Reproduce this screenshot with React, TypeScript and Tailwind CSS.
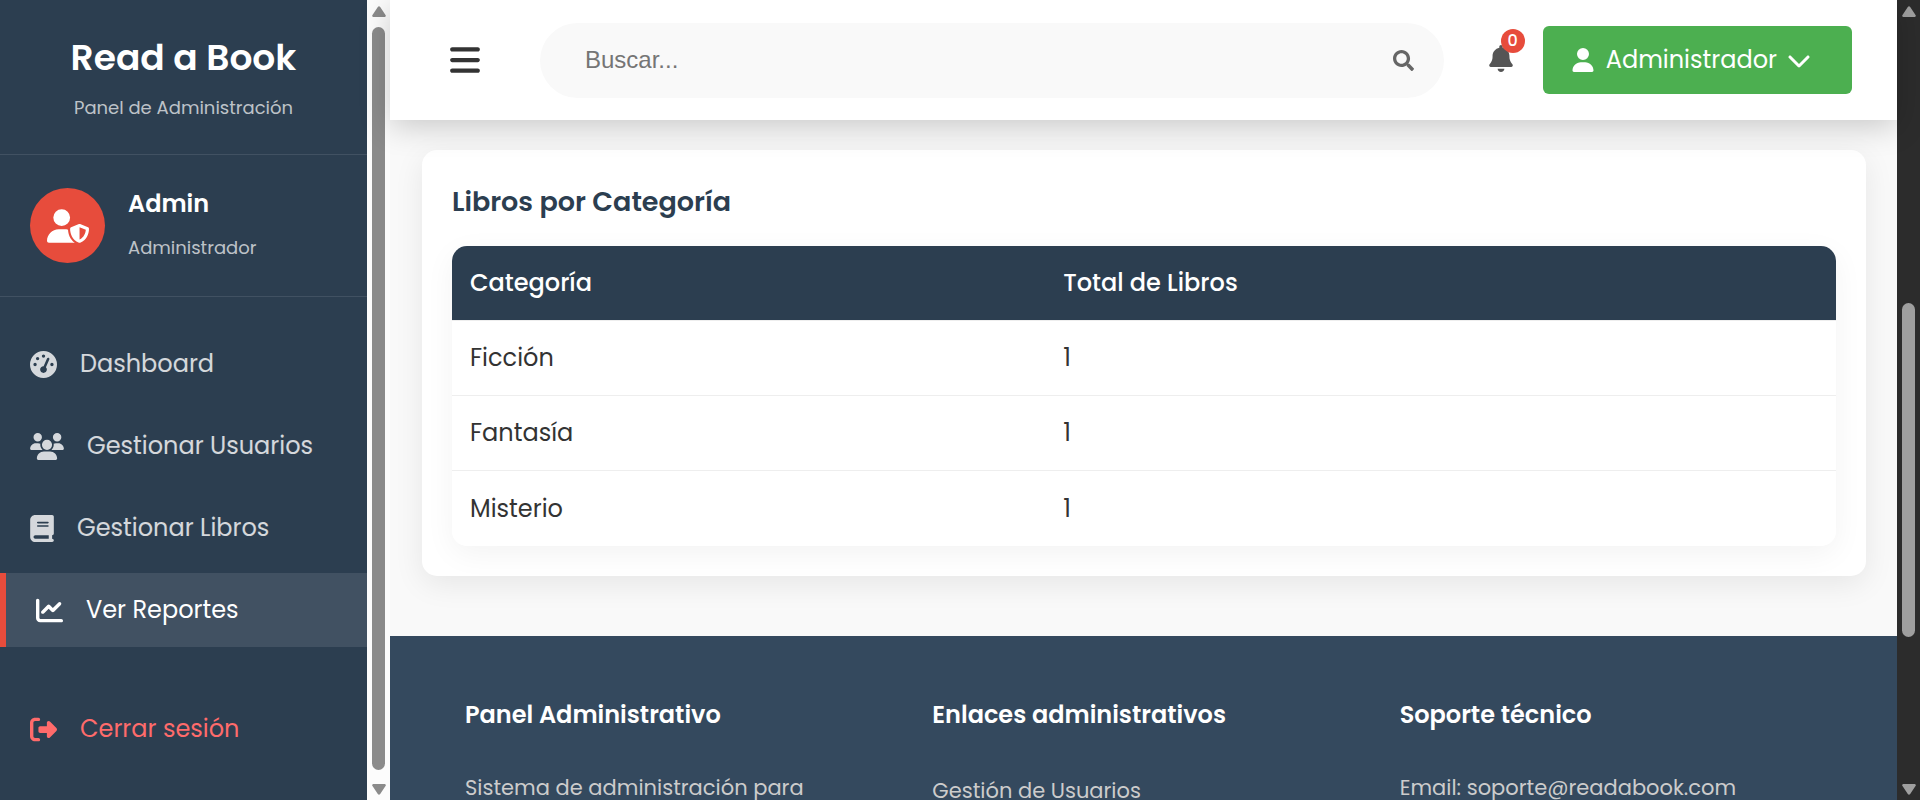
import React from "react";
import {
  FaBars,
  FaBell,
  FaBook,
  FaChartLine,
  FaChevronDown,
  FaGaugeHigh,
  FaRightFromBracket,
  FaUser,
  FaUsers,
  FaUserShield,
} from "react-icons/fa6";
import { FaSearch } from "react-icons/fa";
import type { IconType } from "react-icons";

type NavItem = { label: string; icon: IconType; iconWidth: string; active?: boolean };

const navItems: NavItem[] = [
  { label: "Dashboard", icon: FaGaugeHigh, iconWidth: "w-[27px]" },
  { label: "Gestionar Usuarios", icon: FaUsers, iconWidth: "w-[34px]" },
  { label: "Gestionar Libros", icon: FaBook, iconWidth: "w-6" },
  { label: "Ver Reportes", icon: FaChartLine, iconWidth: "w-[27px]", active: true },
];

const categories = [
  { name: "Ficción", total: 1 },
  { name: "Fantasía", total: 1 },
  { name: "Misterio", total: 1 },
];

function Arrow({ down = false }: { down?: boolean }) {
  return (
    <svg viewBox="0 0 14 11" className="h-[11px] w-[14px] shrink-0" fill="currentColor" aria-hidden="true">
      <path
        d={
          down
            ? "M1.5 0h11a1.2 1.2 0 0 1 1 2L8.2 10a1.5 1.5 0 0 1-2.4 0L.5 2a1.2 1.2 0 0 1 1-2z"
            : "M1.5 11h11a1.2 1.2 0 0 0 1-2L8.2 1a1.5 1.5 0 0 0-2.4 0L.5 9a1.2 1.2 0 0 0 1 2z"
        }
      />
    </svg>
  );
}

function Sidebar() {
  return (
    <aside className="w-[367px] shrink-0 overflow-hidden bg-[#2c3e50]">
      <div className="flex flex-col items-center border-b border-white/10 pt-8 pb-8">
        <h1 className="text-[36px] leading-[52px] font-semibold text-white">Read a Book</h1>
        <p className="mt-[10px] text-[18px] leading-7 text-white/70">Panel de Administración</p>
      </div>
      <div className="flex items-center gap-[23px] border-b border-white/10 px-[30px] py-8">
        <div className="flex size-[75px] items-center justify-center rounded-full bg-[#e74c3c] text-white">
          <FaUserShield className="h-[34px] w-[42px]" />
        </div>
        <div className="flex flex-col gap-3">
          <h2 className="text-[24px] leading-[33px] font-semibold text-white">Admin</h2>
          <p className="text-[18px] leading-8 text-white/70">Administrador</p>
        </div>
      </div>
      <nav className="flex flex-col gap-2 pt-[30px]">
        {navItems.map(({ label, icon: Icon, iconWidth, active }) => (
          <a
            key={label}
            href="#"
            className={
              active
                ? "flex h-[74px] items-center gap-[23px] border-l-[6px] border-[#e74c3c] bg-white/10 px-[30px] text-[24px] text-white"
                : "flex h-[74px] items-center gap-[23px] px-[30px] text-[24px] text-white/80"
            }
          >
            <Icon className={`h-[27px] shrink-0 ${iconWidth}`} />
            {label}
          </a>
        ))}
        <a href="#" className="mt-[37px] flex h-[74px] items-center gap-[23px] px-[30px] text-[24px] text-[#ff6b6b]">
          <FaRightFromBracket className="size-[27px]" />
          Cerrar sesión
        </a>
      </nav>
    </aside>
  );
}

function Topbar() {
  return (
    <header className="relative z-10 flex h-[120px] shrink-0 items-center bg-white pr-[45px] pl-[60px] shadow-[0_6px_30px_rgba(0,0,0,0.2)]">
      <button type="button" aria-label="Menú" className="text-[#333]">
        <FaBars className="h-[34px] w-[30px]" />
      </button>
      <div className="ml-[60px] flex h-[75px] flex-1 items-center rounded-full bg-[#f9f9f9] pr-[30px] pl-[45px]">
        <input
          type="search"
          aria-label="Buscar"
          placeholder="Buscar..."
          className="min-w-0 flex-1 bg-transparent font-['Liberation_Sans',Arial,sans-serif] text-[24px] outline-none placeholder:text-[#757575]"
        />
        <button type="button" aria-label="Buscar" className="text-[#666]">
          <FaSearch className="size-[21px]" />
        </button>
      </div>
      <button type="button" aria-label="Notificaciones" className="relative ml-[45px] pb-1 text-[#555]">
        <FaBell className="h-[27px] w-6" />
        <span className="absolute -top-4 -right-3 flex size-6 items-center justify-center rounded-full bg-[#e74c3c] text-[16px] font-medium text-white">
          0
        </span>
      </button>
      <button
        type="button"
        className="ml-[30px] flex h-[68px] items-center rounded-md bg-[#4caf50] pr-[41px] pl-[29px] text-[24px] text-white"
      >
        <FaUser className="h-6 w-[22px]" />
        <span className="ml-3">Administrador</span>
        <FaChevronDown className="ml-[10px] size-6" />
      </button>
    </header>
  );
}

function CategoryCard() {
  return (
    <section className="rounded-[15px] bg-white p-[30px] shadow-[0_8px_30px_rgba(0,0,0,0.08)]">
      <h3 className="text-[27px] leading-[43px] font-semibold text-[#2c3e50]">Libros por Categoría</h3>
      <div className="mt-[23px] overflow-hidden rounded-[15px] shadow-[0_8px_30px_rgba(0,0,0,0.05)]">
        <table className="w-full table-fixed border-separate border-spacing-0 text-left text-[24px] text-[#333]">
          <colgroup>
            <col className="w-3/7" />
            <col />
          </colgroup>
          <thead>
            <tr className="bg-[#2c3e50] text-white">
              <th className="h-[75px] border-b border-[#eee] px-[18px] font-medium">Categoría</th>
              <th className="h-[75px] border-b border-[#eee] px-[18px] font-medium">Total de Libros</th>
            </tr>
          </thead>
          <tbody>
            {categories.map((c) => (
              <tr key={c.name} className="group bg-white">
                <td className="h-[75px] border-b border-[#eee] px-[18px] group-last:border-b-0">{c.name}</td>
                <td className="h-[75px] border-b border-[#eee] px-[18px] group-last:border-b-0">{c.total}</td>
              </tr>
            ))}
          </tbody>
        </table>
      </div>
    </section>
  );
}

function Footer() {
  return (
    <footer className="grid flex-1 grid-cols-3 gap-[45px] bg-[#34495e] px-[75px] pt-[60px] text-[21px] leading-8 text-[#ccc]">
      <div>
        <h4 className="text-[24px] leading-[38px] font-semibold text-white">Panel Administrativo</h4>
        <p className="mt-[38px]">Sistema de administración para</p>
      </div>
      <div>
        <h4 className="text-[24px] leading-[38px] font-semibold text-white">Enlaces administrativos</h4>
        <a href="#" className="mt-[41px] block">Gestión de Usuarios</a>
      </div>
      <div>
        <h4 className="text-[24px] leading-[38px] font-semibold text-white">Soporte técnico</h4>
        <p className="mt-[38px]">Email: soporte@readabook.com</p>
      </div>
    </footer>
  );
}

export default function App() {
  return (
    <div className="flex h-screen overflow-hidden bg-[#f9f9f9] font-[Poppins,Inter,sans-serif]">
      <Sidebar />
      <div className="flex w-[23px] shrink-0 flex-col items-center bg-[#fcfcfc] pt-[6px] pb-[5px] text-[#8b8b8b]" aria-hidden="true">
        <Arrow />
        <div className="mt-[10px] mb-[14px] w-[13px] flex-1 rounded-full bg-[#8b8b8b]" />
        <Arrow down />
      </div>
      <div className="flex min-w-0 flex-1 flex-col">
        <Topbar />
        <main className="pt-[30px] pr-[31px] pb-[60px] pl-8">
          <CategoryCard />
        </main>
        <Footer />
      </div>
      <div className="flex w-[23px] shrink-0 flex-col items-center justify-between bg-[#2c2c2c] pt-[6px] pb-[5px] text-[#9f9f9f]" aria-hidden="true">
        <Arrow />
        <div className="mt-[138px] h-[334px] w-[13px] rounded-full bg-[#9f9f9f]" />
        <Arrow down />
      </div>
    </div>
  );
}
